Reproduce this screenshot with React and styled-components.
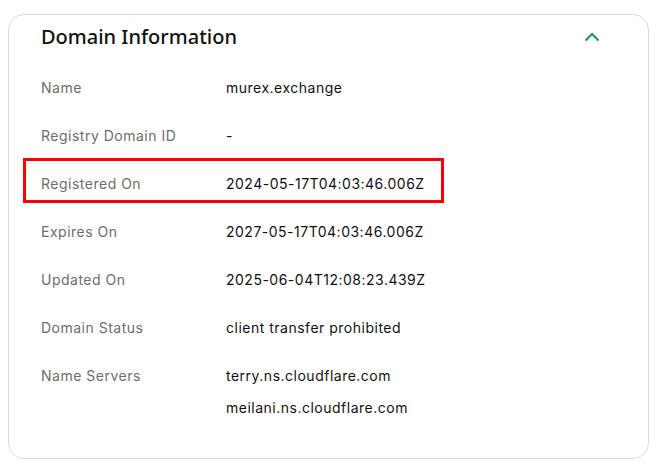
import React from "react";
import styled, { createGlobalStyle } from "styled-components";

const Global = createGlobalStyle`
  html, body { margin: 0; padding: 0; background: #ffffff; }
  body { font-family: "Noto Sans", "Open Sans", sans-serif; }
`;

const Page = styled.div`
  padding: 14px 10px 12px 8px;
`;

const Card = styled.section`
  border: 1px solid #d6dce1;
  border-radius: 16px;
  padding: 0 32px 34px 32px;
  background: #fff;
`;

const Header = styled.div`
  display: flex;
  align-items: center;
  justify-content: space-between;
  padding: 8px 0 13px 0;
`;

const Title = styled.h2`
  margin: 0;
  font-size: 20px;
  line-height: 28px;
  font-weight: 500;
  color: #111111;
`;

const Toggle = styled.button`
  border: 0;
  background: transparent;
  padding: 0;
  margin-right: 12px;
  display: flex;
  align-items: center;
  justify-content: center;
  width: 24px;
  height: 24px;
  color: #1a8a8f;
  cursor: pointer;
`;

const List = styled.dl`
  margin: 0;
  display: flex;
  flex-direction: column;
  font-family: "Inter", "Noto Sans", sans-serif;
  letter-spacing: 0.5px;
`;

const Row = styled.div`
  position: relative;
  display: grid;
  grid-template-columns: 185px 1fr;
  align-items: start;
  padding: ${(p) => (p.$multi ? "8px 0 0 0" : "0")};
  min-height: 48px;
  line-height: ${(p) => (p.$multi ? "32px" : "48px")};
`;

const Label = styled.dt`
  margin: 0;
  font-size: 14px;
  color: #6d6d6d;
`;

const Values = styled.dd`
  margin: 0;
  font-size: 14px;
  color: #111111;
  display: flex;
  flex-direction: column;
`;

const Highlight = styled.div`
  position: absolute;
  left: -18px;
  top: -2px;
  width: 421px;
  height: 45px;
  box-sizing: border-box;
  border: 3px solid #ff0000;
  pointer-events: none;
`;

const rows = [
  { label: "Name", values: ["murex.exchange"] },
  { label: "Registry Domain ID", values: ["-"] },
  { label: "Registered On", values: ["2024-05-17T04:03:46.006Z"], highlight: true },
  { label: "Expires On", values: ["2027-05-17T04:03:46.006Z"] },
  { label: "Updated On", values: ["2025-06-04T12:08:23.439Z"] },
  { label: "Domain Status", values: ["client transfer prohibited"] },
  { label: "Name Servers", values: ["terry.ns.cloudflare.com", "meilani.ns.cloudflare.com"] },
];

export default function App() {
  return (
    <>
      <Global />
      <Page>
        <Card>
          <Header>
            <Title>Domain Information</Title>
            <Toggle aria-label="Collapse">
              <svg width="16" height="10" viewBox="0 0 16 10" fill="none">
                <path d="M1.5 8.5 L8 2 L14.5 8.5" stroke="currentColor" strokeWidth="2" />
              </svg>
            </Toggle>
          </Header>
          <List>
            {rows.map((r) => (
              <Row key={r.label} $multi={r.values.length > 1}>
                <Label>{r.label}</Label>
                <Values>
                  {r.values.map((v) => (
                    <span key={v}>{v}</span>
                  ))}
                </Values>
                {r.highlight && <Highlight />}
              </Row>
            ))}
          </List>
        </Card>
      </Page>
    </>
  );
}
